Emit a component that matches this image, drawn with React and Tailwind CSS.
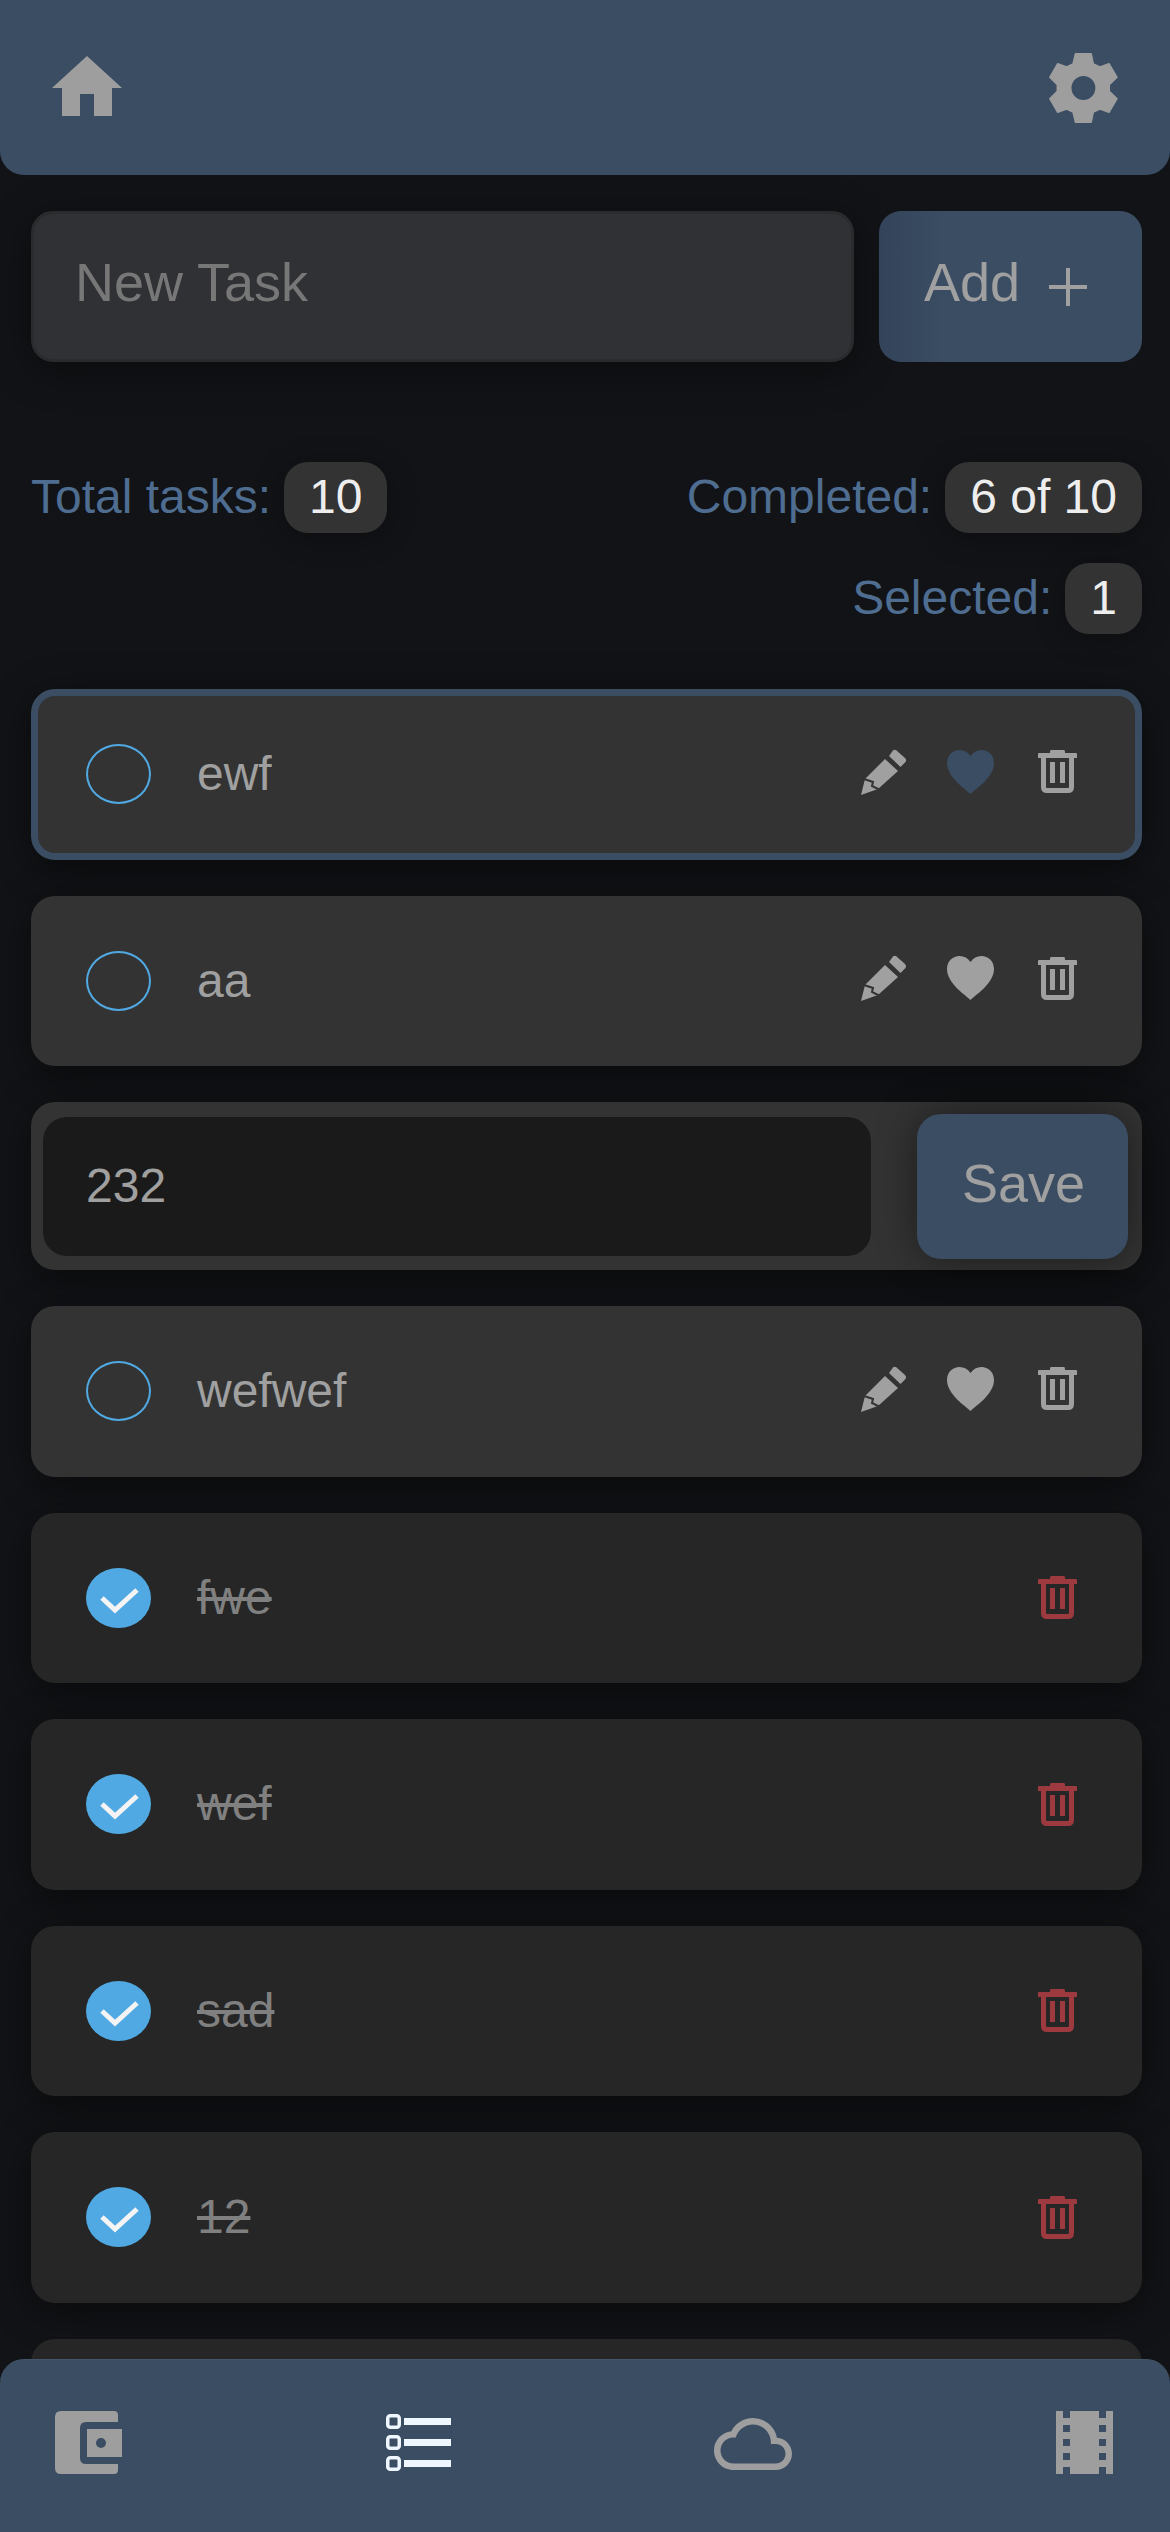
import { MdCloudQueue } from 'react-icons/md'

const tasks = [
    { id: 1, title: 'ewf', selected: true },
    { id: 2, title: 'aa' },
    { id: 3, title: '232', editing: true },
    { id: 4, title: 'wefwef' },
    { id: 5, title: 'fwe', done: true },
    { id: 6, title: 'wef', done: true },
    { id: 7, title: 'sad', done: true },
    { id: 8, title: '12', done: true },
]

export default function App() {
    return (
        <div className="relative h-[2532px] w-[1170px] overflow-hidden bg-[#111316] font-['Liberation_Sans',Arial,sans-serif] text-[48px]">
            <header className="flex h-[175px] items-center justify-between rounded-b-[24px] bg-[#3b4d63] pl-[52px] pr-[51px]">
                <HomeIcon />
                <GearIcon />
            </header>

            <main className="pl-[31px] pr-[28px] pt-9">
                {/* New task */}
                <div className="flex h-[151px] gap-[25px]">
                    <input
                        placeholder="New Task"
                        className="h-full min-w-0 flex-1 rounded-[22px] border-[3px] border-[#2a2b2d] bg-[#303134] pb-[9px] pl-[41px] text-[54px] text-[#a0a0a0] shadow-[0_8px_40px_rgba(0,0,0,0.4)] outline-none placeholder:text-[#777777]"
                    />
                    <button className="flex w-[263px] items-center justify-center rounded-[22px] bg-linear-to-r from-[#33445a] from-0% to-[#3b4d63] to-25% pr-[10px] text-[54px] text-[#a0a0a0]">
                        <span className="mb-[9px]">Add</span>
                        <svg viewBox="0 0 38 38" className="ml-[29px] h-[38px] w-[38px]">
                            <path d="M19 0V38M0 19H38" stroke="currentColor" strokeWidth="4" />
                        </svg>
                    </button>
                </div>

                {/* Stats */}
                <div className="mt-[99px] flex justify-between">
                    <Stat label="Total tasks:" value="10" />
                    <Stat label="Completed:" value="6 of 10" />
                </div>
                <div className="mt-[29px] flex justify-end">
                    <Stat label="Selected:" value="1" />
                </div>

                {/* Tasks */}
                <div className="mt-[55px] flex flex-col gap-9">
                    {tasks.map(task =>
                        task.editing ? <EditRow key={task.id} task={task} /> : <TaskRow key={task.id} task={task} />
                    )}
                    <div className="h-[170.5px] rounded-[24px] bg-[#262626]" />
                </div>
            </main>

            {/* Bottom nav sits over the list */}
            <nav className="absolute inset-x-0 bottom-0 flex h-[173px] items-start justify-between rounded-t-[24px] border-t border-[#46566a] bg-[#3b4d63] pl-[55px] pr-[57px] pt-[51px]">
                <WalletIcon />
                <ListIcon />
                <MdCloudQueue size={78} className="-mt-[6px] text-[#9e9e9e]" />
                <FilmIcon />
            </nav>
        </div>
    )
}

function Stat({ label, value }) {
    return (
        <div className="flex items-center">
            <span className="text-[#4f6d91]">{label}</span>
            <span className="ml-[13px] flex h-[71px] items-center rounded-[24px] bg-[#333333] px-[25px] text-[#eeeeee] shadow-[0_4px_30px_rgba(0,0,0,0.3)]">
                {value}
            </span>
        </div>
    )
}

function TaskRow({ task }) {
    const { title, done, selected } = task
    return (
        <div className={`flex h-[170.5px] items-center rounded-[24px] border-[7px] pl-[48px] pr-[58px] shadow-[0_8px_40px_rgba(0,0,0,0.45)] ${selected ? 'border-[#3b4d63]' : 'border-transparent'} ${done ? 'bg-[#262626]' : 'bg-[#333333]'}`}>
            {done ? (
                <span className="flex h-[60px] w-[65px] items-center justify-center rounded-[50%] bg-[#50a9e2]">
                    <svg viewBox="0 0 65 60" className="h-[60px] w-[65px]">
                        <path d="M16 30L29 42L51 22" fill="none" stroke="#f4f4f4" strokeWidth="5" />
                    </svg>
                </span>
            ) : (
                <span className="h-[60px] w-[65px] rounded-[50%] border-[2.5px] border-[#50a9e2]" />
            )}
            <span className={`ml-[46px] flex-1 ${done ? 'text-[#808080] line-through' : 'text-[#a0a0a0]'}`}>{title}</span>
            {done ? (
                <TrashIcon className="text-[#9c3a3f]" />
            ) : (
                <div className="-mt-[5px] flex items-center text-[#a0a0a0]">
                    <PencilIcon />
                    <HeartIcon className={`ml-10 ${selected ? 'text-[#3b4d63]' : ''}`} />
                    <TrashIcon className="ml-11" />
                </div>
            )}
        </div>
    )
}

function EditRow({ task }) {
    return (
        <div className="flex h-[168px] items-center rounded-[24px] bg-[#333333] pl-[12px] pr-[14px] shadow-[0_8px_40px_rgba(0,0,0,0.45)]">
            <input
                readOnly
                value={task.title}
                className="h-[139px] w-[828px] rounded-[24px] bg-[#1a1a1a] pb-[2px] pl-[43px] text-[#a0a0a0] outline-none"
            />
            <button className="ml-[46px] h-[145px] w-[211px] rounded-[24px] bg-[#3b4d63] pb-[5px] pl-[2px] text-[54px] text-[#a0a0a0] shadow-[0_0_40px_rgba(0,0,0,0.45)]">
                Save
            </button>
        </div>
    )
}

function HomeIcon() {
    return (
        <svg viewBox="0 0 70 60" className="-mt-1 h-[60px] w-[70px] text-[#9e9e9e]">
            <path fill="currentColor" d="M35 0L70 32H60V60H42V38H28V60H10V32H0Z" />
        </svg>
    )
}

function GearIcon() {
    return (
        <svg viewBox="0 0 70 70" className="h-[70px] w-[70px] text-[#9e9e9e]">
            <path
                fill="currentColor"
                stroke="currentColor"
                strokeWidth="1.500"
                strokeLinejoin="round"
                fillRule="evenodd"
                d="M26.500 0.800H42.200L44.300 11L51 14L60 10.700L68 24.300L60.300 31.700V38.300L68 45.700L60 59.300L51 56L44.300 59L42.200 69.200H26.500L24 59L17.700 56L8.700 59.300L0.800 45.700L8.300 38.300V31.700L0.800 24.300L8.700 10.700L17.700 14L24 11ZM34.400 22.300A12.700 12.700 0 1 0 34.400 47.700A12.700 12.700 0 1 0 34.400 22.300Z"
            />
        </svg>
    )
}

function PencilIcon() {
    return (
        <svg viewBox="0 0 46 46" className="h-[46px] w-[46px]">
            <path fill="currentColor" d="M28 7L32 1.500Q33.500 0 35.500 1.500L44 9Q46 11 44.500 13L39.500 18Z" />
            <path fill="currentColor" d="M24 10L37 22L17 40L0 46L4 30Z" />
            <path fill="none" stroke="#333333" strokeWidth="2" d="M3 30L12 33L11 37L19 41" />
        </svg>
    )
}

function HeartIcon({ className = '' }) {
    return (
        <svg viewBox="0 0 47 44" className={`h-[44px] w-[47px] ${className}`}>
            <path fill="currentColor" d="M23.500 44C20 40 0 28 0 13C0 5 6 0 12.500 0C17 0 21 2 23.500 6C26 2 30 0 34.500 0C41 0 47 5 47 13C47 28 27 40 23.500 44Z" />
        </svg>
    )
}

function TrashIcon({ className = '' }) {
    return (
        <svg viewBox="0 0 39 43" className={`h-[43px] w-[39px] ${className}`}>
            <path fill="currentColor" d="M13 0H26Q27 0 27 2V3H38Q39 3 39 4V8H0V4Q0 3 1 3H12V2Q12 0 13 0Z" />
            <path fill="none" stroke="currentColor" strokeWidth="5" d="M5.500 8V37Q5.500 40.500 9 40.500H30Q33.500 40.500 33.500 37V8" />
            <path fill="currentColor" d="M12 12H17V33H12ZM22 12H27V33H22Z" />
        </svg>
    )
}

function WalletIcon() {
    return (
        <svg viewBox="0 0 67 63" className="h-[63px] w-[67px] text-[#9e9e9e]">
            <path fill="currentColor" d="M6 0H59Q63 0 63 4V11H31Q25 11 25 17V47Q25 53 31 53H63V59Q63 63 59 63H6Q0 63 0 57V6Q0 0 6 0Z" />
            <path fill="currentColor" fillRule="evenodd" d="M32 18H67V46H32ZM46 27A5 5 0 1 0 46 37A5 5 0 1 0 46 27Z" />
        </svg>
    )
}

function ListIcon() {
    return (
        <svg viewBox="0 0 65 57" className="mt-[3px] h-[57px] w-[65px] text-[#eef6ff]">
            {[0, 21, 42].map(y => (
                <g key={y}>
                    <rect x="1.750" y={y + 1.75} width="11.500" height="11.500" rx="2.500" fill="none" stroke="currentColor" strokeWidth="3.500" />
                    <rect x="18" y={y + 4} width="47" height="7" fill="currentColor" />
                </g>
            ))}
        </svg>
    )
}

function FilmIcon() {
    const holes = [0, 14, 28, 42, 56]
    const d = holes.map(y => `M7 ${y}h7v7h-7zM43 ${y}h7v7h-7z`).join('')
    return (
        <svg viewBox="0 0 57 63" className="h-[63px] w-[57px] text-[#9e9e9e]">
            <path fill="currentColor" fillRule="evenodd" d={`M0 0H57V63H0Z${d}`} />
        </svg>
    )
}
